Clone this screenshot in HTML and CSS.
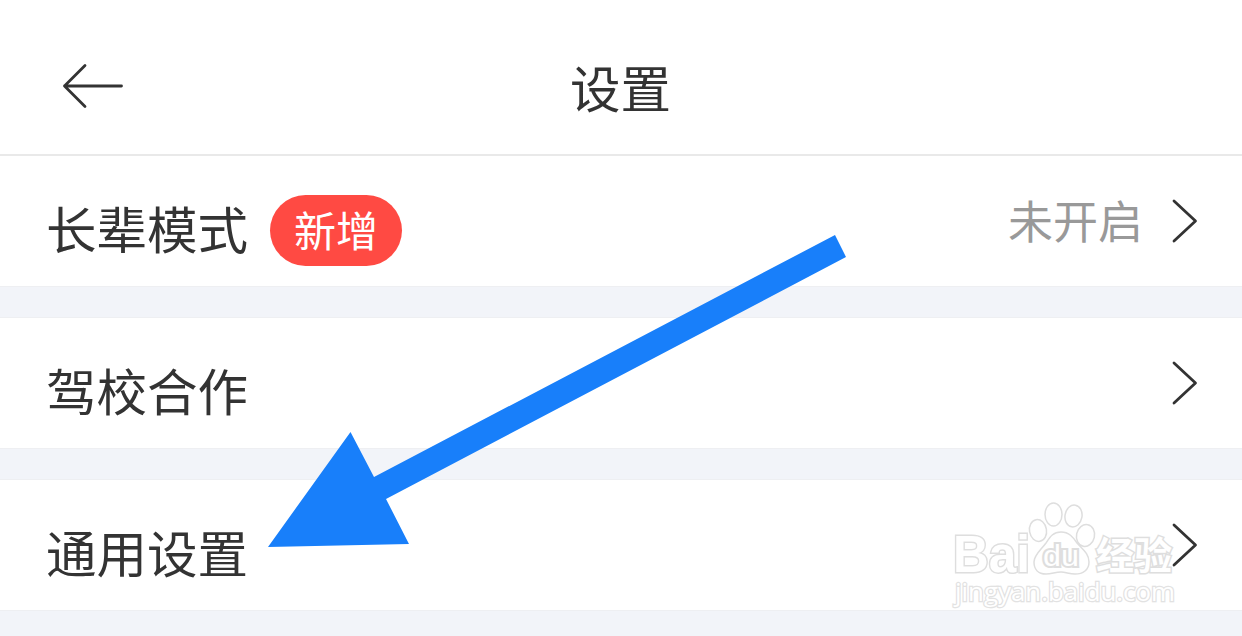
FILE: index.html
```html
<!DOCTYPE html>
<html lang="zh-CN">
<head>
  <meta charset="UTF-8">
  <title>设置</title>
  <link rel="stylesheet" href="styles.css">
</head>
<body>
  <div class="header">
    <svg class="back" width="64" height="48" viewBox="0 0 64 48">
      <path d="M25 3.5 L4.500 24 L25 44.500 M4.500 24 H61.500"/>
    </svg>
    <h1>设置</h1>
  </div>

  <ul class="list">
    <li>
      <span class="label">长辈模式</span>
      <span class="tag">新增</span>
      <span class="value">未开启</span>
      <svg class="more" width="28" height="46" viewBox="0 0 28 46"><path d="M3 3 L24.5 23 L3 43"/></svg>
    </li>
    <li>
      <span class="label">驾校合作</span>
      <svg class="more" width="28" height="46" viewBox="0 0 28 46"><path d="M3 3 L24.5 23 L3 43"/></svg>
    </li>
    <li>
      <span class="label">通用设置</span>
      <svg class="more" width="28" height="46" viewBox="0 0 28 46"><path d="M3 3 L24.5 23 L3 43"/></svg>
    </li>
  </ul>

  <!-- pointer to the third row -->
  <svg class="pointer" width="578" height="312" viewBox="0 0 578 312">
    <polygon points="0,312 82.5,197 106,242 567,0 578,22 118,264 141,309"/>
  </svg>

  <svg class="watermark" width="230" height="116" viewBox="0 0 230 116">
    <g class="paw">
      <ellipse cx="89" cy="35.500" rx="8.500" ry="11" transform="rotate(-10 89 35.500)"/>
      <ellipse cx="104.500" cy="19.500" rx="8.500" ry="11.500"/>
      <ellipse cx="124.500" cy="21" rx="8.500" ry="11" transform="rotate(10 124.500 21)"/>
      <ellipse cx="136.500" cy="40.500" rx="9" ry="11" transform="rotate(12 136.500 40.500)"/>
      <path d="M112 37 C120 37 124 42 128 48 C133 54 140 58 140 67 C140 75 134 79 126 79 C120 79 117 77 112 77 C106 77 103 79 97 79 C89 79 85 74 85 67 C85 60 92 55 97 48 C101 42 104 37 112 37 Z"/>
    </g>
    <text class="brand" x="4" y="77" textLength="77" lengthAdjust="spacingAndGlyphs">Bai</text>
    <text class="du" x="94" y="71" textLength="36" lengthAdjust="spacingAndGlyphs">du</text>
    <text class="cn" x="147" y="74" textLength="76" lengthAdjust="spacingAndGlyphs">经验</text>
    <text class="site" x="6" y="106" textLength="220" lengthAdjust="spacingAndGlyphs">jingyan.baidu.com</text>
  </svg>
</body>
</html>
```
FILE: styles.css
```css
body {
  position: relative;
  height: 636px;
  margin: 0;
  overflow: hidden;
  color: #333;
  background-color: #f2f4f9;
  font-family: "Noto Sans CJK SC", sans-serif;
}

/* header */
.header {
  display: grid;
  grid-template-columns: 1fr auto 1fr;
  height: 154px;
  padding: 0 60px;
  background-color: #fff;
  border-bottom: 2px solid #e9e9e9;
}
.back {
  margin-top: 62px;
}
h1 {
  margin: 49px 0 0 -1px;
  font-size: 50.5px;
  line-height: 74px;
  font-weight: normal;
}
.back path, .more path {
  fill: none;
  stroke: #333;
  stroke-width: 2.8;
  stroke-linecap: round;
  stroke-linejoin: round;
}

/* rows */
.list {
  display: flex;
  flex-direction: column;
  gap: 30px;
  margin: 0;
  padding: 0;
  list-style: none;
}
.list li {
  display: flex;
  align-items: center;
  box-sizing: border-box;
  height: 132px;
  padding: 0 43px 0 46px;
  background-color: #fff;
  border-top: 1px solid #eeeff2;
  border-bottom: 1px solid #eeeff2;
}
.list li:first-child {
  height: 131px;
  border-top: none;
}
.label {
  margin-top: 12px;
  font-size: 50.5px;
  line-height: 74px;
}
.tag {
  width: 132px;
  height: 71px;
  margin: 18px 0 0 22px;
  border-radius: 36px;
  color: #fff;
  background-color: #ff4a43;
  font-size: 42px;
  line-height: 68px;
  text-align: center;
}
.value {
  margin: -2px 28px 0 auto;
  color: #999;
  font-size: 45px;
  line-height: 66px;
}
.more {
  margin-left: auto;
}
.value + .more {
  margin-left: 0;
}

.pointer {
  position: absolute;
  left: 268px;
  top: 235px;
  fill: #187ffa;
}

/* watermark */
.watermark {
  position: absolute;
  left: 949px;
  top: 495px;
  fill: #fff;
  stroke: #dedede;
  stroke-width: 1.5;
}
.watermark text {
  paint-order: stroke;
  stroke-width: 3;
}
.brand {
  font: bold 52px "Liberation Sans", sans-serif;
}
.watermark .du {
  font: 29px "Liberation Sans", sans-serif;
  stroke-width: 4;
}
.cn {
  font: bold 38px "Noto Sans CJK SC", sans-serif;
}
.watermark .site {
  font: 26px "Open Sans", sans-serif;
  stroke: #e2e2e2;
  stroke-width: 2.5;
}
```
